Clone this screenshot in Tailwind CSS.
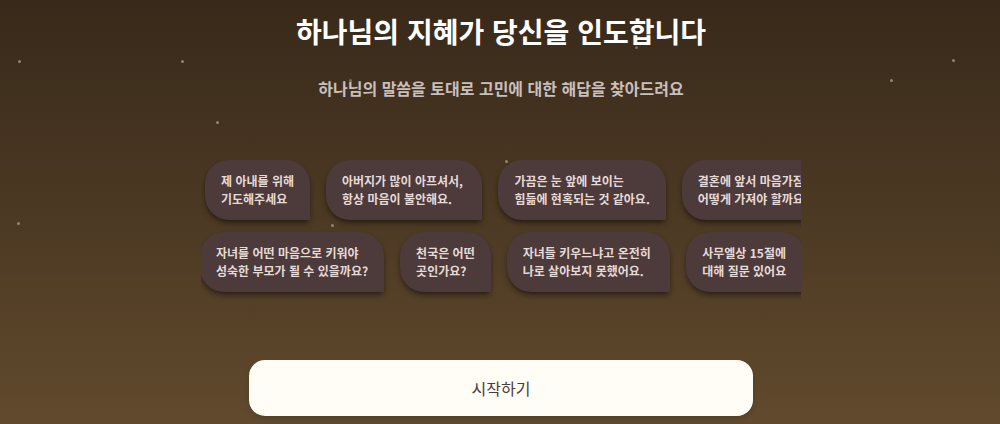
<!DOCTYPE html>
<html lang="ko">
  <head>
    <meta charset="UTF-8" />
    <meta name="viewport" content="width=device-width, initial-scale=1.0" />
    <title>하나님의 지혜가 당신을 인도합니다</title>
    <script src="https://cdn.jsdelivr.net/npm/@tailwindcss/browser@4"></script>
  </head>
  <body
    class="relative min-h-screen overflow-x-hidden bg-linear-to-b from-[#38291a] to-[#614a2d] font-['Noto_Sans_CJK_KR',sans-serif]"
  >
    <main class="flex flex-col items-center pt-[11px] pb-2 pl-0.5">
      <h1 class="text-center text-[28px] leading-10 font-bold text-white">
        하나님의 지혜가 당신을 인도합니다
      </h1>
      <p class="mt-[25px] text-center text-base leading-6 font-bold text-[#c9bfbc]">
        하나님의 말씀을 토대로 고민에 대한 해답을 찾아드려요
      </p>

      <!-- Sliding question bubbles -->
      <div
        class="mt-15 flex w-full max-w-[600px] flex-col gap-3 overflow-hidden pb-2 text-xs leading-[18px] font-bold whitespace-nowrap text-[#e6dad7]"
      >
        <ul class="flex gap-4 pl-1">
          <li class="shrink-0 rounded-3xl rounded-br-none bg-[#4d3a3a] px-4 py-3 shadow-md shadow-black/40">
            제 아내를 위해<br />기도해주세요
          </li>
          <li class="shrink-0 rounded-3xl rounded-br-none bg-[#4d3a3a] px-4 py-3 shadow-md shadow-black/40">
            아버지가 많이 아프셔서,&nbsp;<br />항상 마음이 불안해요.
          </li>
          <li class="shrink-0 rounded-3xl rounded-br-none bg-[#4d3a3a] px-4 py-3 shadow-md shadow-black/40">
            가끔은 눈 앞에 보이는<br />힘듦에 현혹되는 것 같아요.
          </li>
          <li class="shrink-0 rounded-3xl rounded-br-none bg-[#4d3a3a] px-4 py-3 shadow-md shadow-black/40">
            결혼에 앞서 마음가짐을<br />어떻게 가져야 할까요?
          </li>
        </ul>
        <ul class="-ml-px flex gap-4">
          <li class="shrink-0 rounded-3xl rounded-br-none bg-[#4d3a3a] px-4 py-3 shadow-md shadow-black/40">
            자녀를 어떤 마음으로 키워야<br />성숙한 부모가 될 수 있을까요?
          </li>
          <li class="shrink-0 rounded-3xl rounded-br-none bg-[#4d3a3a] px-4 py-3 shadow-md shadow-black/40">
            천국은 어떤<br />곳인가요?
          </li>
          <li class="shrink-0 rounded-3xl rounded-br-none bg-[#4d3a3a] px-4 py-3 shadow-md shadow-black/40">
            자녀들 키우느냐고 온전히&nbsp;<br />나로 살아보지 못했어요.
          </li>
          <li class="shrink-0 rounded-3xl rounded-br-none bg-[#4d3a3a] px-4 py-3 shadow-md shadow-black/40">
            사무엘상 15절에&nbsp;<br />대해 질문 있어요
          </li>
        </ul>
      </div>

      <button
        type="button"
        class="mt-15 h-14 w-full max-w-[504px] rounded-2xl bg-[#fffdf5] text-base text-[#4d3a3a] shadow-md shadow-black/10"
      >
        시작하기
      </button>
    </main>

    <!-- Stars -->
    <div class="pointer-events-none absolute inset-0" aria-hidden="true">
      <span class="absolute top-[60px] left-[1.8%] size-[3px] rounded-full bg-[#a89a86]/80"></span>
      <span class="absolute top-[60px] left-[18.1%] size-[3px] rounded-full bg-[#a89a86]/80"></span>
      <span class="absolute top-[121px] left-[21.6%] size-[3px] rounded-full bg-[#a89a86]/80"></span>
      <span class="absolute top-[222px] left-[1.7%] size-[3px] rounded-full bg-[#a89a86]/80"></span>
      <span class="absolute top-[224px] left-[33.1%] size-[3px] rounded-full bg-[#a89a86]/80"></span>
      <span class="absolute top-[160px] left-[50.5%] size-[3px] rounded-full bg-[#a89a86]/80"></span>
      <span class="absolute top-[46px] left-[63.5%] size-[3px] rounded-full bg-[#a89a86]/60"></span>
      <span class="absolute top-[79px] left-[34.9%] size-[3px] rounded-full bg-[#a89a86]/60"></span>
      <span class="absolute top-[79px] left-[89%] size-[3px] rounded-full bg-[#a89a86]/80"></span>
      <span class="absolute top-[59px] left-[95.2%] size-[3px] rounded-full bg-[#a89a86]/80"></span>
    </div>
  </body>
</html>
